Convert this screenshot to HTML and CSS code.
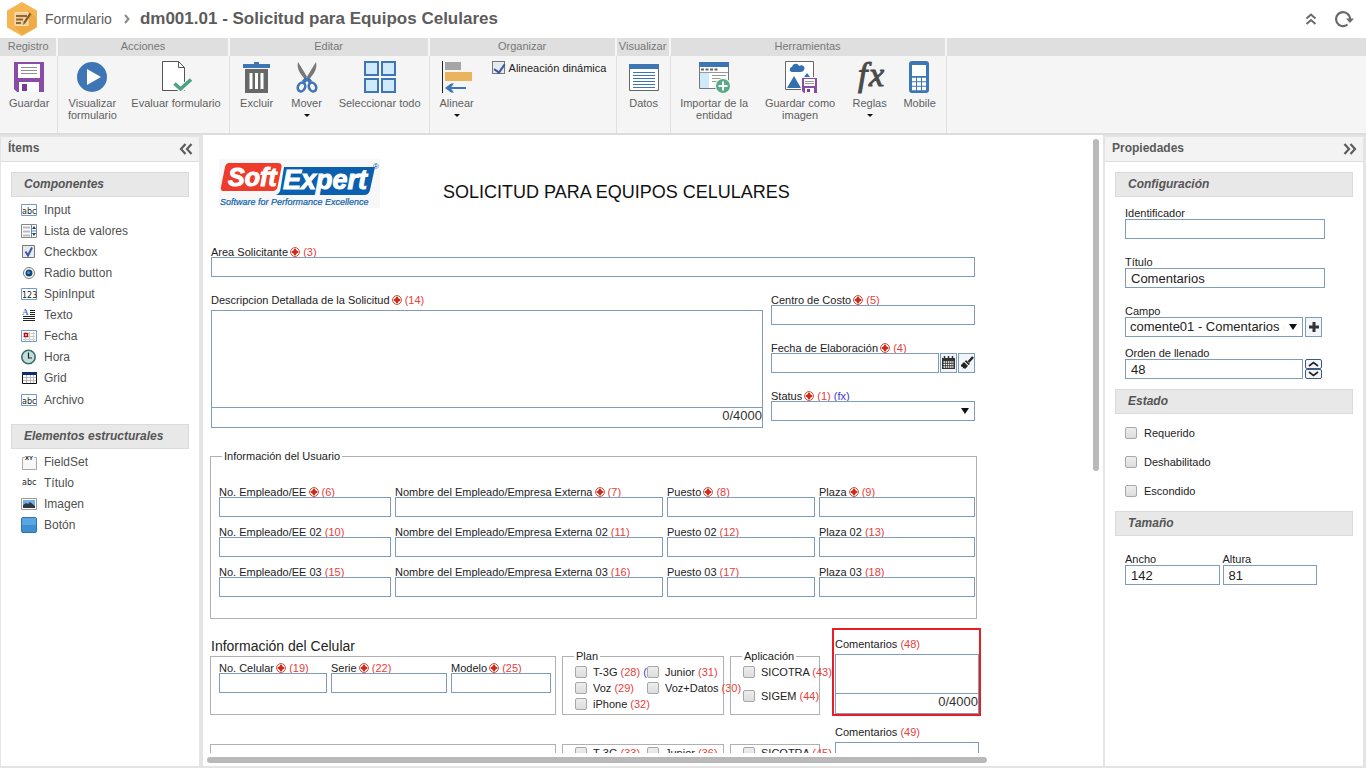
FILE: index.html
```html
<!DOCTYPE html>
<html lang="es">
<head>
    <meta charset="UTF-8">
    <meta name="viewport" content="width=device-width, initial-scale=1.0">
    <title>Formulario - dm001.01</title>
    <link rel="stylesheet" href="styles.css">
</head>
<body>
    <!-- Required mark, shared by the field labels -->
    <svg class="sprite" aria-hidden="true">
        <symbol id="req" viewBox="0 0 10 10">
            <circle cx="5" cy="5" r="4.4" fill="#fff" stroke="#d8432f" stroke-width="1"/>
            <path d="M5 1.800v6.400M1.800 5h6.400" stroke="#d22a16" stroke-width="2"/>
            <path d="M3 3l4 4M7 3L3 7" stroke="#d22a16" stroke-width=".8"/>
        </symbol>
    </svg>

    <header class="topbar">
        <svg class="app-logo" width="30" height="34" viewBox="0 0 30 34">
            <path d="M15 1l14 8v16l-14 8-14-8V9z" fill="#f5b553" stroke="#f5b553" stroke-width="2" stroke-linejoin="round"/>
            <path d="M22 9l7 7v9l-14 8-8-9z" fill="#eeaa45"/>
            <path d="M8 10.500h13v13H8z" fill="#f8cf92" stroke="#fbe3bd"/>
            <path d="M9 14h11M9 17.500h7M9 21h5" stroke="#8a6a36" stroke-width="2"/>
            <path d="M24.500 12l-6 9-2.500 2 .5-3 6-9z" fill="#7a5c34"/>
        </svg>
        <a class="crumb" href="#">Formulario</a>
        <svg width="6" height="10" viewBox="0 0 6 10"><path d="M1 1l3.500 4L1 9" fill="none" stroke="#8a8a8a" stroke-width="2"/></svg>
        <h1>dm001.01 - Solicitud para Equipos Celulares</h1>
        <div class="topbar-actions">
            <button type="button" aria-label="Contraer">
                <svg width="12" height="14" viewBox="0 0 12 14"><path d="M1.500 6.500L6 2.500l4.500 4M1.500 12L6 8l4.500 4" fill="none" stroke="#6b6b6b" stroke-width="2"/></svg>
            </button>
            <button type="button" aria-label="Actualizar">
                <svg width="20" height="18" viewBox="0 0 20 18"><path d="M13.500 14.500A7 7 0 1 1 16 9" fill="none" stroke="#6b6b6b" stroke-width="2.200"/><path d="M12 8.500h8l-4 4.500z" fill="#6b6b6b"/></svg>
            </button>
        </div>
    </header>

    <nav class="ribbon">
        <section class="group">
            <h2>Registro</h2>
            <div class="tools">
                <button type="button" class="tool">
                    <svg width="32" height="32" viewBox="0 0 32 32"><path d="M1 1h30v30H4l-3-3z" fill="#8a4ba6"/><path d="M5 3h22v14H5z" fill="#fff"/><path d="M8 6.500h16M8 9.500h16M8 12.500h16" stroke="#8f8f8f"/><path d="M6 21h20v10H6z" fill="#fff"/><path d="M9 23h5v7H9z" fill="#7a3c98"/></svg>
                    <span>Guardar</span>
                </button>
            </div>
        </section>
        <section class="group">
            <h2>Acciones</h2>
            <div class="tools">
                <button type="button" class="tool tool-preview">
                    <svg width="32" height="32" viewBox="0 0 32 32"><circle cx="16" cy="16" r="15" fill="#3e76b5"/><path d="M11 8l14 8-14 8z" fill="#fff"/></svg>
                    <span>Visualizar formulario</span>
                </button>
                <button type="button" class="tool">
                    <svg width="32" height="32" viewBox="0 0 32 32"><path d="M2.500.500h16l6 6v23h-22z" fill="#fff" stroke="#555"/><path d="M18.500.500v6h6" fill="none" stroke="#555"/><path d="M15 23l6 5.500L31 18.500" fill="none" stroke="#f5f5f5" stroke-width="6"/><path d="M14.500 22.500l6 5.500L31 18.500" fill="none" stroke="#4aa282" stroke-width="3.500"/></svg>
                    <span>Evaluar formulario</span>
                </button>
            </div>
        </section>
        <section class="group">
            <h2>Editar</h2>
            <div class="tools">
                <button type="button" class="tool">
                    <svg width="32" height="32" viewBox="0 0 32 32"><path d="M13 3V1h5v2h11v4H2V3z" fill="#3e76b5"/><path d="M4 8h23v24H4z" fill="#686868"/><path d="M10 12v16M15.500 12v16M21 12v16" stroke="#fff" stroke-width="3"/></svg>
                    <span>Excluir</span>
                </button>
                <button type="button" class="tool">
                    <svg width="32" height="32" viewBox="0 0 32 32"><path d="M7 1l11 18-3 1L9 12C7 8 6 5 7 1zM25 1L14 19l3 1 6-8c2-4 3-7 2-11z" fill="#777"/><path d="M16 17l-3.500 4M16 17l3.500 4" stroke="#3e76b5" stroke-width="4"/><ellipse cx="10.500" cy="26" rx="3.500" ry="4.500" transform="rotate(25 10.500 26)" fill="none" stroke="#3e76b5" stroke-width="2.600"/><ellipse cx="21.500" cy="26" rx="3.500" ry="4.500" transform="rotate(-25 21.500 26)" fill="none" stroke="#3e76b5" stroke-width="2.600"/></svg>
                    <span>Mover</span>
                    <i class="caret"></i>
                </button>
                <button type="button" class="tool">
                    <svg width="32" height="32" viewBox="0 0 32 32"><g fill="#cfeafd" stroke="#3e76b5" stroke-width="2"><path d="M1 1h13v13H1zM18 1h13v13H18zM1 18h13v13H1zM18 18h13v13H18z"/></g></svg>
                    <span>Seleccionar todo</span>
                </button>
            </div>
        </section>
        <section class="group group-organize">
            <h2>Organizar</h2>
            <div class="tools">
                <button type="button" class="tool">
                    <svg width="32" height="32" viewBox="0 0 32 32"><path d="M1.500 0v32" stroke="#222"/><path d="M4 1h16v8H4z" fill="#a5a5a5"/><path d="M4 11h27v9H4z" fill="#eab45f"/><path d="M7 27h18" stroke="#3e76b5" stroke-width="2"/><path d="M4 27l6-4.500h3L9.500 27l3.500 4.500h-3z" fill="#3e76b5"/></svg>
                    <span>Alinear</span>
                    <i class="caret"></i>
                </button>
                <label class="dynamic"><input type="checkbox" class="check-blue" checked>Alineación dinámica</label>
            </div>
        </section>
        <section class="group">
            <h2>Visualizar</h2>
            <div class="tools">
                <button type="button" class="tool">
                    <svg width="32" height="32" viewBox="0 0 32 32"><path d="M1.500 3.500h29v26h-29z" fill="#fff" stroke="#666"/><path d="M1 3h30v5H1z" fill="#3e76b5"/><path d="M5 11.500h22M5 14.500h22M5 17.500h22M5 20.500h22M5 23.500h22M5 26.500h22" stroke="#3e76b5"/></svg>
                    <span>Datos</span>
                </button>
            </div>
        </section>
        <section class="group">
            <h2>Herramientas</h2>
            <div class="tools">
                <button type="button" class="tool tool-import">
                    <svg width="32" height="32" viewBox="0 0 32 32"><path d="M1.500 2.500h29v25h-29z" fill="#fff" stroke="#777"/><path d="M1 1h30v5H1z" fill="#3e76b5"/><path d="M3 8.500h18" stroke="#666" stroke-width="2" stroke-dasharray="3 1.500"/><path d="M2 11.500h28" stroke="#999"/><path d="M2 12h9v15H2z" fill="#cfeafd"/><path d="M14 14.500h14M14 17.500h9M14 20.500h6" stroke="#999"/><circle cx="25" cy="25" r="8" fill="#f5f5f5"/><circle cx="25" cy="25" r="7" fill="#58ab89"/><path d="M25 20.500v9M20.500 25h9" stroke="#fff" stroke-width="2"/></svg>
                    <span>Importar de la entidad</span>
                </button>
                <button type="button" class="tool tool-image">
                    <svg width="34" height="32" viewBox="0 0 34 32"><path d="M2.500.500h28v28h-28z" fill="#fff" stroke="#666"/><path d="M9 11c-3 0-3-5 0-5 1-4 6-4 7-1 3-2 7 1 5 4-1 2-3 2-5 2z" fill="#3470ae"/><path d="M4 27l7-12 7 12zM18 20l6-8 6 8v7H18z" fill="#3470ae"/><path d="M18 16h16v17H18z" fill="#f5f5f5"/><path d="M19 17h15v15H21l-2-2z" fill="#8a4ba6"/><path d="M21 18h11v7H21z" fill="#fff"/><path d="M22 20.500h9M22 22.500h9" stroke="#999"/><path d="M22 27h9v5h-9z" fill="#fff"/><path d="M24 28h3v3h-3z" fill="#7a3c98"/></svg>
                    <span>Guardar como imagen</span>
                </button>
                <button type="button" class="tool">
                    <svg class="fx" width="32" height="32" viewBox="0 0 32 32"><text x="4" y="25">f<tspan x="15">x</tspan></text></svg>
                    <span>Reglas</span>
                    <i class="caret"></i>
                </button>
                <button type="button" class="tool">
                    <svg width="32" height="32" viewBox="0 0 32 32"><rect x="5" y="0" width="20" height="32" rx="3" fill="#3e76b5"/><path d="M8 4h14v11H8z" fill="#fff"/><path d="M8 18.500h14M8 23h14M8 27.500h14" stroke="#fff" stroke-width="3.500" stroke-dasharray="4 1"/></svg>
                    <span>Mobile</span>
                </button>
            </div>
        </section>
    </nav>

    <main class="workspace">
        <!-- Items panel -->
        <aside class="panel panel-items">
            <div class="panel-head">
                <h2>Ítems</h2>
                <button type="button" aria-label="Ocultar ítems">
                    <svg width="14" height="12" viewBox="0 0 14 12"><path d="M6.500 1L2 6l4.500 5M12.500 1L8 6l4.500 5" fill="none" stroke="#5d5d5d" stroke-width="2.200"/></svg>
                </button>
            </div>
            <div class="panel-body">
                <h3>Componentes</h3>
                <ul class="items">
                    <li><svg width="16" height="16" viewBox="0 0 16 16"><path d="M.500 2.500h15v11H.500z" fill="#fff" stroke="#6f9bd0"/><text x="1" y="12" class="tiny">abc</text></svg>Input</li>
                    <li><svg width="16" height="16" viewBox="0 0 16 16"><path d="M.500 1.500h15v13H.500z" fill="#fff" stroke="#888"/><path d="M2 4.500h7M2 8.500h7M2 12.500h7" stroke="#bbb" stroke-width="2"/><path d="M10.500 2v12M10.500 8h5" stroke="#5b86bd"/><path d="M11 6l2-3 2 3zM11 10l2 3 2-3z" fill="#1c3f7c"/></svg>Lista de valores</li>
                    <li><svg width="16" height="16" viewBox="0 0 16 16"><path d="M1.500 1.500h12v12h-12z" fill="#e6eaf2" stroke="#777"/><path d="M4.500 7.500l2.500 4 4-8" fill="none" stroke="#3c5a9c" stroke-width="2"/></svg>Checkbox</li>
                    <li><svg width="16" height="16" viewBox="0 0 16 16"><circle cx="8" cy="8" r="5.500" fill="#fff" stroke="#777"/><circle cx="8" cy="8" r="3.500" fill="#12456f"/><circle cx="7.500" cy="7.500" r="1.500" fill="#3fa0d8"/></svg>Radio button</li>
                    <li><svg width="16" height="16" viewBox="0 0 16 16"><path d="M.500 2.500h15v11H.500z" fill="#fff" stroke="#6f9bd0"/><text x="1" y="12" class="tiny">123</text></svg>SpinInput</li>
                    <li><svg width="16" height="16" viewBox="0 0 16 16"><text x="1" y="8" class="letter-a">A</text><path d="M9 3.500h5M9 5.500h5M9 7.500h5M2 9.500h12M2 11.500h12M2 13.500h12" stroke="#222"/></svg>Texto</li>
                    <li><svg width="16" height="16" viewBox="0 0 16 16"><path d="M.500 2.500h15v11H.500z" fill="#fff" stroke="#6f9bd0"/><path d="M2 5.500h12M2 8.500h12M2 11.500h12M4.500 4v9M8.500 4v9M12.500 4v9" stroke="#ccc"/><path d="M3.500 5.500h3v3h-3z" fill="#fff" stroke="#b31212" stroke-width="1.500"/></svg>Fecha</li>
                    <li><svg width="16" height="16" viewBox="0 0 16 16"><circle cx="7.500" cy="8" r="6.700" fill="#bfe0dc" stroke="#446a6c" stroke-width="1.600"/><path d="M7.500 3.500V9h3.500" fill="none" stroke="#222" stroke-width="1.200"/></svg>Hora</li>
                    <li class="tall"><svg width="16" height="16" viewBox="0 0 16 16"><path d="M1.500 2.500h14v11h-14z" fill="#fff" stroke="#111"/><path d="M2 7.500h13M2 10.500h13M5.500 5v8M9.500 5v8M12.500 5v8" stroke="#bbb"/><path d="M1 2h15v3H1z" fill="#102e6e"/></svg>Grid</li>
                    <li class="tall"><svg width="16" height="16" viewBox="0 0 16 16"><path d="M.500 2.500h15v11H.500z" fill="#fff" stroke="#6f9bd0"/><text x="1" y="12" class="tiny">abc</text></svg>Archivo</li>
                </ul>
                <h3>Elementos estructurales</h3>
                <ul class="items">
                    <li><svg width="16" height="16" viewBox="0 0 16 16"><path d="M4 3.500H1.500v12h14v-12H13" fill="#f7f7f7" stroke="#aaa"/><text x="4" y="6" class="xy">XY</text></svg>FieldSet</li>
                    <li><svg width="16" height="16" viewBox="0 0 16 16"><text x="1" y="10" class="tiny">abc</text></svg>Título</li>
                    <li><svg width="16" height="16" viewBox="0 0 16 16"><path d="M.500 2.500h15v11H.500z" fill="#fff" stroke="#999"/><path d="M2 4h12v8H2z" fill="#76aee6"/><path d="M2 12V9l3-2 2 1 2-2 5 4v2z" fill="#2d3a45"/></svg>Imagen</li>
                    <li><svg width="16" height="16" viewBox="0 0 16 16"><rect x=".500" y=".500" width="15" height="15" rx="1.500" fill="#3f8fd2" stroke="#2d74b3"/><path d="M1 1h14v7H1z" fill="#5ba5e0"/></svg>Botón</li>
                </ul>
            </div>
        </aside>

        <!-- Form canvas -->
        <section class="canvas">
            <div class="canvas-view">
                <form class="form">
                    <div class="form-head">
                        <svg class="brand" width="161" height="49" viewBox="0 0 161 49">
                            <path d="M0 0h161v49H0z" fill="#f7f7f7"/>
                            <path d="M10 4h49q4 0 3.500 4l-4 20q-1 4-5 4H5q-4 0-3-4L6 8q1-4 4-4z" fill="#ee3b2b"/>
                            <path d="M65 8h91l-5 23q-1 5-6 5H57q4-2 4.500-6z" fill="#0a5fae"/>
                            <text x="9" y="27" class="brand-soft">Soft</text>
                            <text x="64" y="30" class="brand-expert">Expert</text>
                            <text x="1" y="46" class="brand-tag">Software for Performance Excellence</text>
                            <text x="154" y="10" font-size="8" fill="#0a5fae">®</text>
                        </svg>
                        <h2>SOLICITUD PARA EQUIPOS CELULARES</h2>
                    </div>

                    <div class="field">
                        <label for="area">Area Solicitante <svg class="req"><use href="#req"/></svg> <b>(3)</b></label>
                        <input type="text" id="area">
                    </div>

                    <div class="request">
                        <div class="field field-area">
                            <label for="desc">Descripcion Detallada de la Solicitud <svg class="req"><use href="#req"/></svg> <b>(14)</b></label>
                            <textarea id="desc"></textarea>
                            <div class="counter">0/4000</div>
                        </div>
                        <div class="stack">
                            <div class="field">
                                <label for="costo">Centro de Costo <svg class="req"><use href="#req"/></svg> <b>(5)</b></label>
                                <input type="text" id="costo">
                            </div>
                            <div class="field">
                                <label for="fecha">Fecha de Elaboración <svg class="req"><use href="#req"/></svg> <b>(4)</b></label>
                                <div class="with-buttons">
                                    <input type="text" id="fecha">
                                    <button type="button" aria-label="Calendario">
                                        <svg width="13" height="14" viewBox="0 0 13 14"><path d="M0 2h13v11H0z" fill="#333"/><path d="M1.500 6h10M1.500 8.500h10M1.500 11h10" stroke="#fff" stroke-width="1.500" stroke-dasharray="1.500 .7"/><path d="M2.500 0v4M6.500 0v4M10.500 0v4" stroke="#333" stroke-width="1.500"/></svg>
                                    </button>
                                    <button type="button" aria-label="Limpiar">
                                        <svg width="14" height="14" viewBox="0 0 14 14"><path d="M13 1L8.500 6" stroke="#222" stroke-width="2.500"/><path d="M6 4l4 4-1.500 1L5 5.500z" fill="#222"/><path d="M4 6l4 4-3 3-1-1-1.500.5L3 11l-2-.5V9z" fill="#222"/></svg>
                                    </button>
                                </div>
                            </div>
                            <div class="field">
                                <label for="status">Status <svg class="req"><use href="#req"/></svg> <b>(1)</b> <em>(fx)</em></label>
                                <div class="select"><select id="status"><option></option></select></div>
                            </div>
                        </div>
                    </div>

                    <fieldset class="box user">
                        <legend>Información del Usuario</legend>
                        <div class="user-grid">
                            <div class="field"><label for="e1">No. Empleado/EE <svg class="req"><use href="#req"/></svg> <b>(6)</b></label><input type="text" id="e1"></div>
                            <div class="field"><label for="n1">Nombre del Empleado/Empresa Externa <svg class="req"><use href="#req"/></svg> <b>(7)</b></label><input type="text" id="n1"></div>
                            <div class="field"><label for="p1">Puesto <svg class="req"><use href="#req"/></svg> <b>(8)</b></label><input type="text" id="p1"></div>
                            <div class="field"><label for="z1">Plaza <svg class="req"><use href="#req"/></svg> <b>(9)</b></label><input type="text" id="z1"></div>
                            <div class="field"><label for="e2">No. Empleado/EE 02 <b>(10)</b></label><input type="text" id="e2"></div>
                            <div class="field"><label for="n2">Nombre del Empleado/Empresa Externa 02 <b>(11)</b></label><input type="text" id="n2"></div>
                            <div class="field"><label for="p2">Puesto 02 <b>(12)</b></label><input type="text" id="p2"></div>
                            <div class="field"><label for="z2">Plaza 02 <b>(13)</b></label><input type="text" id="z2"></div>
                            <div class="field"><label for="e3">No. Empleado/EE 03 <b>(15)</b></label><input type="text" id="e3"></div>
                            <div class="field"><label for="n3">Nombre del Empleado/Empresa Externa 03 <b>(16)</b></label><input type="text" id="n3"></div>
                            <div class="field"><label for="p3">Puesto 03 <b>(17)</b></label><input type="text" id="p3"></div>
                            <div class="field"><label for="z3">Plaza 03 <b>(18)</b></label><input type="text" id="z3"></div>
                        </div>
                    </fieldset>

                    <div class="phone-row phone-first">
                        <div class="phone">
                            <h3>Información del Celular</h3>
                            <div class="box phone-grid">
                                <div class="field"><label for="cel">No. Celular <svg class="req"><use href="#req"/></svg> <b>(19)</b></label><input type="text" id="cel"></div>
                                <div class="field"><label for="serie">Serie <svg class="req"><use href="#req"/></svg> <b>(22)</b></label><input type="text" id="serie"></div>
                                <div class="field"><label for="modelo">Modelo <svg class="req"><use href="#req"/></svg> <b>(25)</b></label><input type="text" id="modelo"></div>
                            </div>
                        </div>
                        <fieldset class="box plan">
                            <legend>Plan</legend>
                            <div class="plan-grid">
                                <label><input type="checkbox">T-3G <b>(28)</b> <em>(fx)</em></label>
                                <label><input type="checkbox">Junior <b>(31)</b></label>
                                <label><input type="checkbox">Voz <b>(29)</b></label>
                                <label><input type="checkbox">Voz+Datos <b>(30)</b></label>
                                <label><input type="checkbox">iPhone <b>(32)</b></label>
                            </div>
                        </fieldset>
                        <fieldset class="box apps">
                            <legend>Aplicación</legend>
                            <div class="apps-list">
                                <label><input type="checkbox">SICOTRA <b>(43)</b></label>
                                <label><input type="checkbox">SIGEM <b>(44)</b></label>
                            </div>
                        </fieldset>
                        <div class="field comment selected">
                            <label for="com1">Comentarios <b>(48)</b></label>
                            <textarea id="com1"></textarea>
                            <div class="counter">0/4000</div>
                        </div>
                    </div>

                    <div class="phone-row">
                        <div class="phone"><div class="box phone-grid"></div></div>
                        <div class="box plan">
                            <div class="plan-grid">
                                <label><input type="checkbox">T-3G <b>(33)</b></label>
                                <label><input type="checkbox">Junior <b>(36)</b></label>
                            </div>
                        </div>
                        <div class="box apps">
                            <div class="apps-list">
                                <label><input type="checkbox">SICOTRA <b>(45)</b></label>
                            </div>
                        </div>
                        <div class="field comment">
                            <label for="com2">Comentarios <b>(49)</b></label>
                            <textarea id="com2"></textarea>
                            <div class="counter"></div>
                        </div>
                    </div>
                </form>
            </div>
            <div class="scroll-y"><i></i></div>
            <div class="scroll-x"><i></i></div>
        </section>

        <!-- Properties panel -->
        <aside class="panel panel-props">
            <div class="panel-head">
                <h2>Propiedades</h2>
                <button type="button" aria-label="Ocultar propiedades">
                    <svg width="14" height="12" viewBox="0 0 14 12"><path d="M1.500 1L6 6l-4.500 5M7.500 1L12 6l-4.500 5" fill="none" stroke="#5d5d5d" stroke-width="2.200"/></svg>
                </button>
            </div>
            <div class="panel-body">
                <h3>Configuración</h3>
                <div class="props">
                    <div class="field"><label for="ident">Identificador</label><input type="text" id="ident"></div>
                    <div class="field"><label for="titulo">Título</label><input type="text" id="titulo" value="Comentarios"></div>
                    <div class="field">
                        <label for="campo">Campo</label>
                        <div class="with-buttons">
                            <div class="select"><select id="campo"><option>comente01 - Comentarios (texto)</option></select></div>
                            <button type="button" aria-label="Agregar"><svg width="10" height="10" viewBox="0 0 10 10"><path d="M5 0v10M0 5h10" stroke="#333" stroke-width="3"/></svg></button>
                        </div>
                    </div>
                    <div class="field field-order">
                        <label for="orden">Orden de llenado</label>
                        <div class="with-buttons">
                            <input type="text" id="orden" value="48">
                            <div class="spin">
                                <button type="button" aria-label="Subir"><svg width="11" height="6" viewBox="0 0 11 6"><path d="M1 5l4.500-3.500L10 5" fill="none" stroke="#222" stroke-width="1.600"/></svg></button>
                                <button type="button" aria-label="Bajar"><svg width="11" height="6" viewBox="0 0 11 6"><path d="M1 1l4.500 3.500L10 1" fill="none" stroke="#222" stroke-width="1.600"/></svg></button>
                            </div>
                        </div>
                    </div>
                </div>
                <h3>Estado</h3>
                <div class="states">
                    <label><input type="checkbox">Requerido</label>
                    <label><input type="checkbox">Deshabilitado</label>
                    <label><input type="checkbox">Escondido</label>
                </div>
                <h3>Tamaño</h3>
                <div class="size">
                    <div class="field"><label for="ancho">Ancho</label><input type="text" id="ancho" value="142"></div>
                    <div class="field"><label for="altura">Altura</label><input type="text" id="altura" value="81"></div>
                </div>
            </div>
        </aside>
    </main>
</body>
</html>
```

FILE: styles.css
```css
* {
    box-sizing: border-box;
}

body {
    display: flex;
    flex-direction: column;
    height: 100vh;
    margin: 0;
    overflow: hidden;
    background: #fff;
    color: #222;
    font-family: "Liberation Sans", Arial, sans-serif;
    font-size: 11px;
    line-height: 12px;
}

h1, h2, h3, ul {
    margin: 0;
    padding: 0;
}

button, input, select, textarea {
    margin: 0;
    padding: 0;
    border: 0;
    border-radius: 0;
    background: none;
    font: inherit;
    color: inherit;
}

.sprite {
    position: absolute;
    width: 0;
    height: 0;
}

svg {
    flex: none;
}

/* Top bar */
.topbar {
    display: flex;
    flex: none;
    align-items: center;
    gap: 10px;
    height: 38px;
    padding: 0 12px 0 7px;
    color: #5c5c5c;
}

.crumb {
    margin: 0 2px 0 -2px;
    color: #5c5c5c;
    font-size: 14px;
    text-decoration: none;
}

.topbar h1 {
    font-size: 17px;
    line-height: 20px;
}

.topbar-actions {
    display: flex;
    align-items: center;
    gap: 17px;
    margin-left: auto;
}

.topbar-actions button {
    display: flex;
}

/* Ribbon */
.ribbon {
    display: flex;
    flex: none;
    height: 97px;
    background: linear-gradient(#dfdfdf 18px, #f5f5f5 18px);
    border-bottom: 2px solid #dcdcdc;
}

.group h2 {
    height: 18px;
    border-right: 2px solid #f5f5f5;
    color: #777;
    font-size: 11px;
    font-weight: normal;
    line-height: 17px;
    text-align: center;
}

.tools {
    display: flex;
    align-items: flex-start;
    height: 77px;
    padding: 0 1px 0 2px;
    border-right: 1px solid #e0e0e0;
}

.tool {
    display: flex;
    flex-direction: column;
    align-items: center;
    min-width: 50px;
    padding: 5px 7px 0;
    color: #5f5f5f;
    text-align: center;
}

.tool span {
    margin-top: 4px;
}

.tool-preview {
    width: 64px;
}

.tool-import {
    width: 83px;
    padding: 5px 3px 0;
}

.tool-image {
    width: 89px;
}

.group-organize {
    width: 187px;
}

.caret {
    margin-top: 5px;
    border: 3px solid transparent;
    border-top-color: #111;
    border-bottom: 0;
}

.dynamic {
    display: flex;
    align-items: center;
    gap: 4px;
    padding: 5px 0 0 10px;
    white-space: nowrap;
}

.fx {
    overflow: visible;
    font: italic 34px/34px "Liberation Serif", serif;
    fill: #4a4a4a;
    stroke: #4a4a4a;
    stroke-width: 1;
}

/* Workspace */
.workspace {
    display: flex;
    flex: 1;
    min-height: 0;
    background: #e4e4e4;
    border-bottom: 2px solid #e4e4e4;
}

.panel {
    display: flex;
    flex: none;
    flex-direction: column;
    margin-top: 2px;
    background: #fff;
}

.panel-items {
    width: 198px;
    margin-left: 1px;
    margin-right: 4px;
}

.panel-props {
    width: 258px;
    margin-left: 2px;
    margin-right: 3px;
}

.panel-head {
    display: flex;
    align-items: center;
    justify-content: space-between;
    height: 25px;
    padding: 0 6px 0 7px;
    background: #f3f3f3;
    border-bottom: 1px solid #ddd;
}

.panel-head h2 {
    padding-bottom: 2px;
    color: #5a5a5a;
    font-size: 12px;
    line-height: 20px;
}

.panel-head button {
    display: flex;
}

.panel-body {
    padding: 10px;
}

.panel h3 {
    height: 25px;
    padding-left: 12px;
    background: #e8e8e8;
    border: 1px solid #dadada;
    color: #555;
    font-size: 12px;
    font-style: italic;
    line-height: 23px;
}

.items {
    padding: 2px 10px 13px;
    list-style: none;
}

.items li {
    display: flex;
    align-items: center;
    gap: 7px;
    height: 21px;
    color: #505050;
    font-size: 12px;
}

.items .tall {
    height: 22px;
}

.tiny {
    font-family: "DejaVu Sans", sans-serif;
    font-size: 8px;
    fill: #222;
}

.letter-a {
    font: bold 9px "Liberation Serif", serif;
    fill: #4a7ec2;
}

.xy {
    font-size: 6px;
    font-weight: bold;
    fill: #111;
}

/* Fields */
.field {
    display: flex;
    flex-direction: column;
    min-width: 0;
}

.field > label {
    height: 12px;
    line-height: 14px;
    white-space: nowrap;
}

.panel .field > label {
    line-height: 12px;
}

b, em {
    color: #e8403c;
    font-style: normal;
    font-weight: normal;
}

em {
    color: #3a3ad0;
}

.req {
    width: 10px;
    height: 10px;
    margin: 0 0 0 -1px;
    vertical-align: -1px;
}

.field input, .select {
    width: 100%;
    height: 20px;
    border: 1px solid #7f9db9;
    background: #fff;
}

.field input {
    padding: 0 5px;
    font-size: 13px;
}

.select {
    position: relative;
    min-width: 0;
}

.select select {
    display: block;
    width: 100%;
    height: 18px;
    padding: 0 18px 0 4px;
    appearance: none;
    font-size: 13px;
    overflow: hidden;
}

.select::after {
    content: "";
    position: absolute;
    top: 6px;
    right: 5px;
    border: 4px solid transparent;
    border-top: 6px solid #111;
    border-bottom: 0;
    pointer-events: none;
}

.with-buttons {
    display: flex;
    gap: 1px;
}

.with-buttons > button {
    display: flex;
    flex: none;
    align-items: center;
    justify-content: center;
    width: 17px;
    height: 20px;
    background: #f2f5f9;
    border: 1px solid #7f9db9;
}

textarea {
    display: block;
    flex: 1;
    width: 100%;
    border: 1px solid #7f9db9;
    resize: none;
}

.counter {
    height: 20px;
    border: 1px solid #7f9db9;
    border-top: 0;
    color: #333;
    font-size: 13px;
    line-height: 16px;
    text-align: right;
}

input[type="checkbox"] {
    flex: none;
    width: 12px;
    height: 12px;
    appearance: none;
    background: linear-gradient(#eee, #dcdcdc);
    border: 1px solid #a8a8a8;
    border-radius: 2px;
}

input.check-blue:checked {
    width: 13px;
    height: 13px;
    border-color: #777;
    border-radius: 0;
    background: #e6eaf2;
}

.check-blue:checked::after {
    content: "";
    display: block;
    width: 5px;
    height: 9px;
    margin-left: 3px;
    border: solid #3c5a9c;
    border-width: 0 2px 2px 0;
    transform: rotate(35deg);
}

/* Canvas */
.canvas {
    display: grid;
    flex: 1;
    grid-template-columns: 1fr 6px;
    grid-template-rows: 1fr 6px;
    gap: 4px 0;
    min-width: 0;
    padding: 0 4px 3px;
    background: #fff;
}

.canvas-view {
    min-height: 0;
    overflow: hidden;
}

.scroll-y {
    padding-top: 4px;
}

.scroll-y i, .scroll-x i {
    display: block;
    border-radius: 3px;
    background: #b9b9b9;
}

.scroll-y i {
    height: 54%;
}

.scroll-x i {
    width: 88%;
    height: 6px;
}

.form {
    max-width: 774px;
    padding: 0 3px;
}

.form > .field, .request {
    margin: 0 3px 16px 1px;
}

.form-head {
    display: flex;
    gap: 63px;
    height: 110px;
    padding: 24px 0 0 9px;
}

.form-head h2 {
    color: #111;
    font-size: 18px;
    font-weight: normal;
    line-height: 66px;
    white-space: nowrap;
}

.brand-soft, .brand-expert {
    font-weight: bold;
    font-style: italic;
    fill: #fff;
    stroke: #fff;
    stroke-width: 1;
}

.brand-soft {
    font-size: 25px;
}

.brand-expert {
    font-size: 27px;
}

.brand-tag {
    font-size: 9px;
    font-style: italic;
    fill: #0a5fae;
    stroke: #0a5fae;
    stroke-width: .2;
}

.request {
    display: grid;
    grid-template-columns: 552fr 204fr;
    gap: 8px;
    height: 135px;
}

.field-area > label {
    height: 17px;
}

.stack {
    display: flex;
    flex-direction: column;
    gap: 16px;
}

.box {
    min-width: 0;
    margin: 0;
    padding: 0;
    border: 1px solid #aeb0b2;
}

legend {
    margin-left: 11px;
    padding: 0 2px;
}

.user {
    margin: 22px 1px 0 0;
    padding: 23px 1px 21px 8px;
}

.user legend {
    margin-left: 3px;
}

.user-grid {
    display: grid;
    grid-template-columns: 172fr 268fr 148fr 156fr;
    gap: 8px 4px;
}

.phone-row {
    display: grid;
    grid-template-columns: 346px 162px 90px 150px;
    column-gap: 6px;
    align-items: end;
    height: 88px;
}

.phone-first {
    margin-top: 9px;
}

.phone h3 {
    margin-left: 1px;
    font-size: 14px;
    font-weight: normal;
    line-height: 20px;
}

.phone, .plan, .apps {
    margin-bottom: 1px;
}

.phone-grid {
    display: grid;
    grid-template-columns: 108fr 116fr 100fr;
    gap: 4px;
    height: 59px;
    padding: 4px 4px 0 8px;
}

.plan, .apps {
    height: 59px;
}

fieldset.plan, fieldset.apps {
    height: 65px;
}

fieldset .plan-grid, fieldset .apps-list {
    padding-top: 2px;
}

.plan-grid {
    display: grid;
    grid-template-columns: 72px 72px;
    padding-left: 12px;
}

.apps-list {
    display: grid;
    gap: 8px;
    padding-left: 12px;
}

.plan-grid label, .apps-list label {
    height: 16px;
    line-height: 16px;
    white-space: nowrap;
}

.plan-grid input, .apps-list input {
    margin-right: 6px;
    vertical-align: -2px;
}

.comment {
    width: 149px;
    height: 88px;
    margin-left: 6px;
    padding: 8px 0 0 1px;
    border: 2px solid transparent;
}

.comment > label {
    height: 16px;
    line-height: 12px;
}

.selected {
    border-color: #ec1c24;
}

/* Properties */
.props {
    display: flex;
    flex-direction: column;
    gap: 17px;
    padding: 10px 28px 10px 10px;
}

.props .with-buttons {
    gap: 2px;
    margin-right: 3px;
}

.field-order {
    margin-top: -7px;
}

.spin {
    display: flex;
    flex: none;
    flex-direction: column;
    width: 17px;
    height: 20px;
}

.spin button {
    display: flex;
    flex: 1;
    align-items: center;
    justify-content: center;
    border: 1px solid #40597e;
    border-radius: 2px;
    background: #f2f5f9;
}

.states {
    display: grid;
    grid-auto-rows: 29px;
    padding: 4px 10px 6px;
}

.states label {
    display: flex;
    align-items: center;
    gap: 7px;
}

.size {
    display: grid;
    grid-template-columns: 1fr 1fr;
    gap: 3px;
    padding: 17px 36px 0 10px;
}
```
